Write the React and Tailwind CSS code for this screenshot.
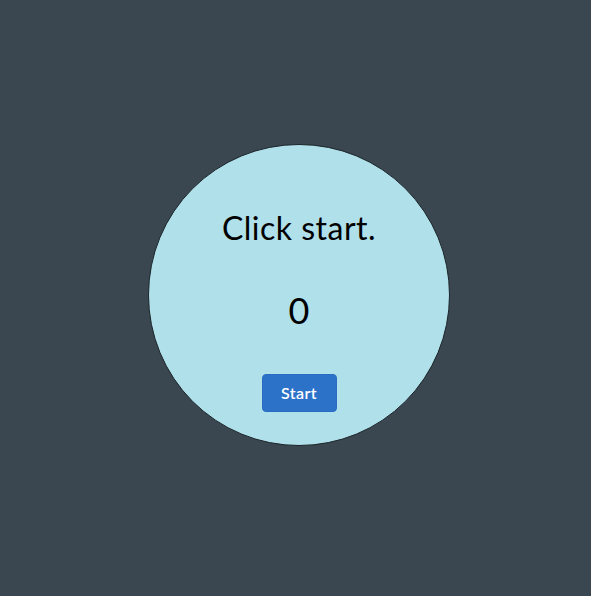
export default function App() {
  return (
    <div
      className="w-full h-[596px] bg-[#3a4750] flex justify-center items-center pl-[7px] pb-[7px]"
      style={{ fontFamily: "Lato, 'Open Sans', sans-serif" }}
    >
      <div className="w-[302px] h-[302px] shrink-0 rounded-full bg-[#b0e0ea] border border-[#1c252a] flex flex-col items-center pt-[64px]">
        <h1 className="text-[32px] leading-[38px] font-normal text-black tracking-[0.5px]">Click start.</h1>
        <div className="mt-[41px] text-[36px] leading-[44px] text-black">0</div>
        <button className="mt-[42px] w-[75px] h-[38px] rounded-[4px] bg-[#2d72c9] border border-[#2a6bc4] text-white text-[16px] font-semibold tracking-[0.4px]">
          Start
        </button>
      </div>
    </div>
  );
}
